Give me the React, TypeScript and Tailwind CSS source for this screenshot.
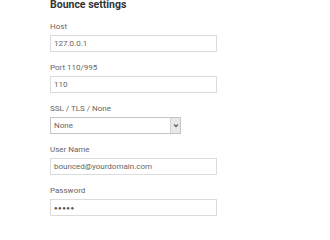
export default function App() {
  const font = { fontFamily: "Roboto, 'Liberation Sans', sans-serif" }

  const Field = ({ label, children }: { label: string; children: React.ReactNode }) => (
    <div className="flex flex-col mb-[11px]">
      <div className="text-[8px] leading-[10px] text-[#666] mb-[3px]">{label}</div>
      {children}
    </div>
  )

  const Input = ({ value, dots }: { value: string; dots?: boolean }) => (
    <div className="w-[167px] h-[17px] border border-[#dcdcdc] bg-white flex items-center px-[3px]">
      <span
        className={
          dots
            ? "text-[6px] leading-none tracking-[0.5px] text-[#555]"
            : "text-[8px] leading-none text-[#666]"
        }
      >
        {value}
      </span>
    </div>
  )

  return (
    <div className="w-[330px] h-[220px] overflow-hidden bg-white" style={font}>
      <div className="pl-[50px] -mt-[2px]">
        <div className="text-[10.5px] leading-[13px] font-bold text-[#333] mb-[11px]">Bounce settings</div>
        <Field label="Host">
          <Input value="127.0.0.1" />
        </Field>
        <Field label="Port 110/995">
          <Input value="110" />
        </Field>
        <Field label="SSL / TLS / None">
          <div className="w-[131px] h-[17px] border border-[#c4c4c4] bg-white flex items-stretch">
            <div className="flex-1 flex items-center px-[3px] text-[8px] leading-none text-[#666]">None</div>
            <div className="w-[10px] bg-[#e8e8e8] border-l border-[#d4d4d4] flex items-center justify-center">
              <svg width="6" height="5" viewBox="0 0 6 5">
                <path d="M1 1.5 L3 3.5 L5 1.5" stroke="#666" strokeWidth="1.3" fill="none" />
              </svg>
            </div>
          </div>
        </Field>
        <Field label="User Name">
          <Input value="bounced@yourdomain.com" />
        </Field>
        <Field label="Password">
          <Input value="●●●●●" dots />
        </Field>
      </div>
    </div>
  )
}
